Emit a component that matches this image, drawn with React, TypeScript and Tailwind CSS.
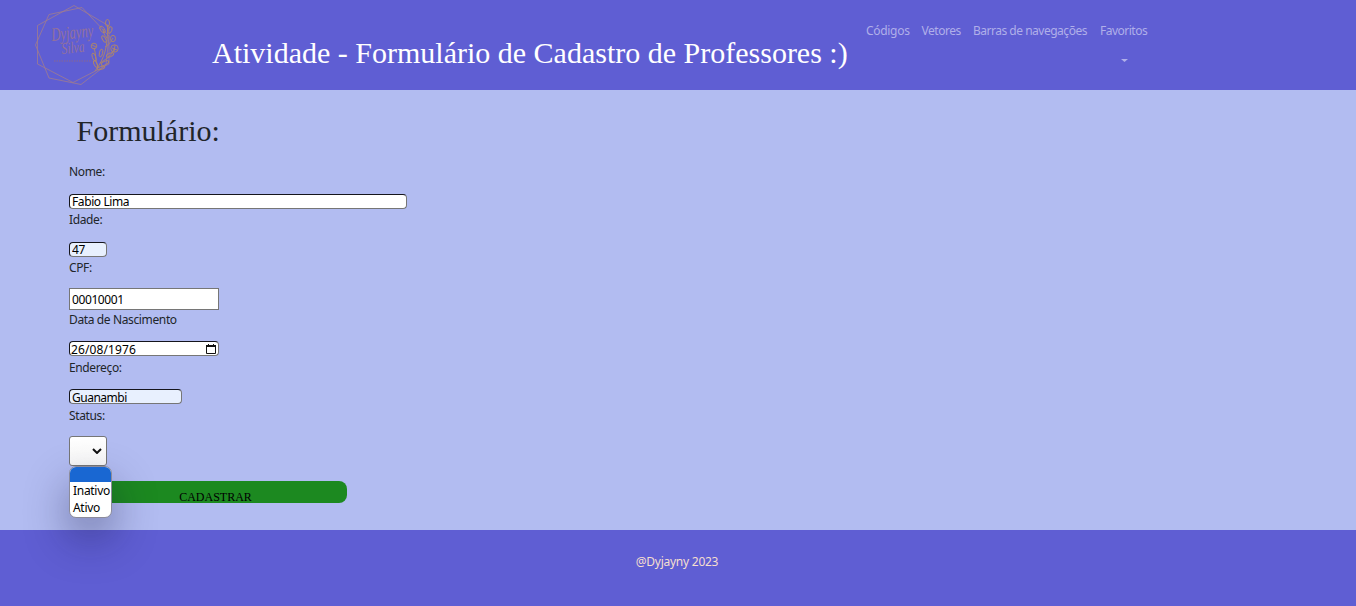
import type { ReactNode } from "react";

const sans = "font-['Noto_Sans','Open_Sans',sans-serif]";
const serif = "font-['Liberation_Serif',serif]";

function Logo() {
  return (
    <svg className="ml-[34px] mt-[3px] h-[84px] w-[88px] shrink-0" viewBox="34 3 88 84" fill="none" stroke="#a07c8e" strokeWidth="0.8">
      <path d="M74 5.500 L109 26 V64 L73 82.500 L37.500 64 V25.500 Z" />
      <path d="M49 14.500 L82 7.500 L109 36 L106 65 L81 84.500 L49 78 L35.500 45 Z" />
      <g stroke="#b08767" strokeWidth="0.9">
        <path d="M95 71 C105 58 108 46 107.500 25 M98 67 C95 59 96 53 94 48 M100 63 C108 58 112 55 114 49 M105 47 C110 44 111 41 113 38 M107 38 C104 35 103 31 103 29" />
        <ellipse cx="107.500" cy="23" rx="2" ry="3.500" />
        <ellipse cx="102.500" cy="29.500" rx="2" ry="3.800" transform="rotate(-35 102.500 29.500)" />
        <ellipse cx="110" cy="30" rx="1.800" ry="3.500" transform="rotate(20 110 30)" />
        <ellipse cx="104" cy="39" rx="1.600" ry="3.500" transform="rotate(-30 104 39)" />
        <ellipse cx="113" cy="38.500" rx="2.500" ry="3.200" />
        <circle cx="94" cy="46" r="2.800" />
        <circle cx="114.500" cy="48.500" r="3.700" />
        <path d="M112 48 L117 50 M115 45 L114 52 M92 45 L96 47" />
        <ellipse cx="110" cy="55" rx="4" ry="1.800" transform="rotate(-20 110 55)" />
        <ellipse cx="94" cy="57" rx="1.700" ry="4" transform="rotate(-18 94 57)" />
        <ellipse cx="101" cy="53" rx="1.600" ry="4" transform="rotate(12 101 53)" />
        <ellipse cx="105" cy="63" rx="4" ry="1.700" transform="rotate(-25 105 63)" />
        <ellipse cx="95.500" cy="64" rx="1.500" ry="3.500" transform="rotate(-25 95.500 64)" />
        <ellipse cx="101" cy="68" rx="4" ry="1.500" transform="rotate(-15 101 68)" />
      </g>
      <g stroke="none" fill="#93719b" fontFamily="Liberation Serif, serif" fontStyle="italic">
        <text x="52" y="41" fontSize="19" textLength="42" lengthAdjust="spacingAndGlyphs" transform="rotate(-6 52 41)">Dyjayny</text>
        <text x="62" y="54" fontSize="16" textLength="23" lengthAdjust="spacingAndGlyphs" transform="rotate(-6 62 54)">Silva</text>
      </g>
      <path d="M54 61 H92" stroke="#7562b1" strokeWidth="1.8" strokeDasharray="1.5 1" />
    </svg>
  );
}

function Label({ children, className }: { children: ReactNode; className: string }) {
  return (
    <label className={`block h-[18px] text-[12px] leading-[18px] tracking-[-0.37px] text-[#212529] ${className}`}>
      {children}
    </label>
  );
}

function Field({ value, className }: { value: string; className: string }) {
  return (
    <input
      type="text"
      defaultValue={value}
      className={`block border border-[#767676] pl-[2px] text-[12px] text-black outline-none ${className}`}
    />
  );
}

const inset = "h-[15px] rounded-[4px] border-t-[#15151c]! border-l-[#15151c]! leading-[13px]";

export default function App() {
  return (
    <div className={`flex h-[606px] w-[1356px] flex-col overflow-hidden bg-[#b2bcf1] ${sans}`}>
      <header className="flex h-[90px] shrink-0 items-start bg-[#5f5ed3]">
        <Logo />
        <h1 className={`ml-[90px] mt-[35px] w-[636px] whitespace-nowrap text-[30px] leading-[36px] text-white ${serif}`}>
          Atividade - Formulário de Cadastro de Professores :)
        </h1>
        <nav className="ml-[18px] mt-[22px] flex items-start whitespace-nowrap text-[12px] leading-[18px] text-[#b0afe9]">
          <a className="w-[55.5px] tracking-[-0.3px]">Códigos</a>
          <a className="w-[51.5px] tracking-[-0.45px]">Vetores</a>
          <a className="w-[127px] tracking-[-0.49px]">Barras de navegações</a>
          <a className="flex w-[50px] flex-col tracking-[-0.5px]">
            Favoritos
            <svg className="ml-[21px] mt-[18px] h-[4px] w-[7px]" viewBox="0 0 7 4" fill="currentColor">
              <path d="M0 1H7L3.500 4Z" />
            </svg>
          </a>
        </nav>
      </header>

      <main className="h-[440px] shrink-0 pl-[69px] pt-[23px]">
        <h2 className={`ml-[7.5px] text-[30px] leading-[36px] text-[#212529] ${serif}`}>Formulário:</h2>
        <form>
          <Label className="mt-[14px]">Nome:</Label>
          <Field value="Fabio Lima" className={`mt-[13px] w-[338px] bg-white tracking-[-0.4px] ${inset}`} />
          <Label className="mt-[2px]">Idade:</Label>
          <Field value="47" className={`mt-[13px] w-[38px] bg-[#e8f0fe] tracking-[-0.4px] ${inset}`} />
          <Label className="mt-[2px]">CPF:</Label>
          <Field value="00010001" className="mt-[11px] h-[22px] w-[150px] bg-white tracking-[-0.4px]" />
          <Label className="mt-px">Data de Nascimento</Label>
          <div className={`mt-[12px] flex w-[150px] items-center justify-between border border-[#767676] bg-white pl-px pr-[2px] text-[12px] text-black ${inset}`}>
            <span className="mt-px tracking-[0.1px]">26/08/1976</span>
            <svg className="h-[10px] w-[10px]" viewBox="0 0 10 10" fill="none" stroke="#111">
              <path d="M.5 1.500H9.500V9.500H.5Z" />
              <path d="M0 2H10" strokeWidth="2" />
              <path d="M2.500 0V2M7.500 0V2" />
            </svg>
          </div>
          <Label className="mt-[3px]">Endereço:</Label>
          <Field value="Guanambi" className={`mt-[12px] w-[113px] bg-[#e8f0fe] pt-[2px] tracking-[-0.5px] ${inset}`} />
          <Label className="mt-[3px]">Status:</Label>
          <div className="relative mt-[11px] h-[30px] w-[38px]">
            <button type="button" aria-label="Status" className="flex h-full w-full items-center justify-end rounded-[3px] border border-[#767676] bg-linear-to-b from-white to-[#f7f7f7] pr-[4px]">
              <svg className="h-[6px] w-[10px]" viewBox="0 0 10 6" fill="none" stroke="#111" strokeWidth="2">
                <path d="M1 1L5 5L9 1" />
              </svg>
            </button>
            <ul className="absolute left-0 top-[30px] z-10 h-[52px] w-[43px] overflow-hidden rounded-[7px] border border-[#8b8b9b] bg-white text-[12px] leading-[17px] tracking-[-0.3px] text-black shadow-[0_20px_44px_rgba(20,20,60,0.42)]">
              <li className="h-[15px] bg-[#1967d2]" />
              <li className="h-[17px] pl-[3px]">Inativo</li>
              <li className="h-[17px] pl-[3px]">Ativo</li>
            </ul>
          </div>
          <button type="button" className={`mt-[15px] block h-[22px] w-[278px] overflow-hidden rounded-[8px] bg-[#1c8920] pl-[15px] pt-[9px] text-[12px] leading-[14px] text-black ${serif}`}>
            CADASTRAR
          </button>
        </form>
      </main>

      <footer className="h-[76px] shrink-0 bg-[#5f5ed3] pt-[23px] pr-[2px] text-center text-[12px] leading-[18px] tracking-[-0.25px] text-[#f5dfcf]">
        @Dyjayny 2023
      </footer>
    </div>
  );
}
